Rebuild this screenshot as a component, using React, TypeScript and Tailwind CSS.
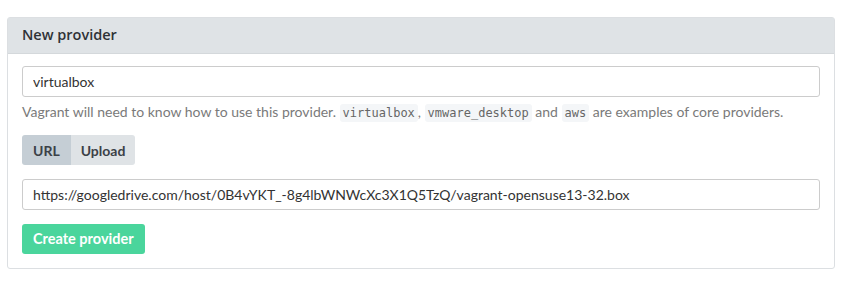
export default function App() {
  return (
    <div className="bg-white w-[852px] h-[286px] pt-[17px] pl-[7px]" style={{ fontFamily: "Lato, 'Liberation Sans', sans-serif" }}>
      <div className="w-[828px] rounded-[3px] border border-[#dcdfe2] bg-white">
        <div className="h-[36px] bg-[#dfe3e6] border-b border-[#d4d8db] px-[14px] flex items-center">
          <h3 className="text-[14.5px] font-semibold text-[#2f3236] -mt-[1px]" style={{ fontFamily: "'Open Sans', sans-serif" }}>New provider</h3>
        </div>
        <div className="px-[14px] pt-[12px] pb-[14px] flex flex-col items-start">
          <input
            className="w-[798px] h-[31px] rounded-[3px] border border-[#cccccc] px-[10px] text-[14px] text-[#333] outline-none"
            defaultValue="virtualbox"
          />
          <p className="mt-[5px] text-[14px] text-[#7a7a7a] leading-[20px]">
            Vagrant will need to know how to use this provider.{" "}
            <Code>virtualbox</Code>, <Code>vmware_desktop</Code> and <Code>aws</Code> are examples of core providers.
          </p>
          <div className="mt-[12px] flex h-[30px] rounded-[3px] overflow-hidden text-[14px] font-bold text-[#3b4147]">
            <button className="px-[11px] bg-[#c5ced5]">URL</button>
            <button className="px-[10px] bg-[#dfe3e6]">Upload</button>
          </div>
          <input
            className="mt-[14px] block w-[798px] h-[31px] rounded-[3px] border border-[#cccccc] px-[10px] text-[14px] text-[#333] outline-none"
            defaultValue="https://googledrive.com/host/0B4vYKT_-8g4lbWNWcXc3X1Q5TzQ/vagrant-opensuse13-32.box"
          />
          <button className="mt-[14px] h-[30px] px-[11px] rounded-[3px] bg-[#4ad59c] text-white text-[14.5px] font-bold">
            Create provider
          </button>
        </div>
      </div>
    </div>
  );
}

function Code({ children }: { children: string }) {
  return (
    <code
      className="rounded-[3px] bg-[#f4f6f8] px-[3px] py-[2px] text-[12px] text-[#666]"
      style={{ fontFamily: "'DejaVu Sans Mono', monospace" }}
    >
      {children}
    </code>
  );
}
